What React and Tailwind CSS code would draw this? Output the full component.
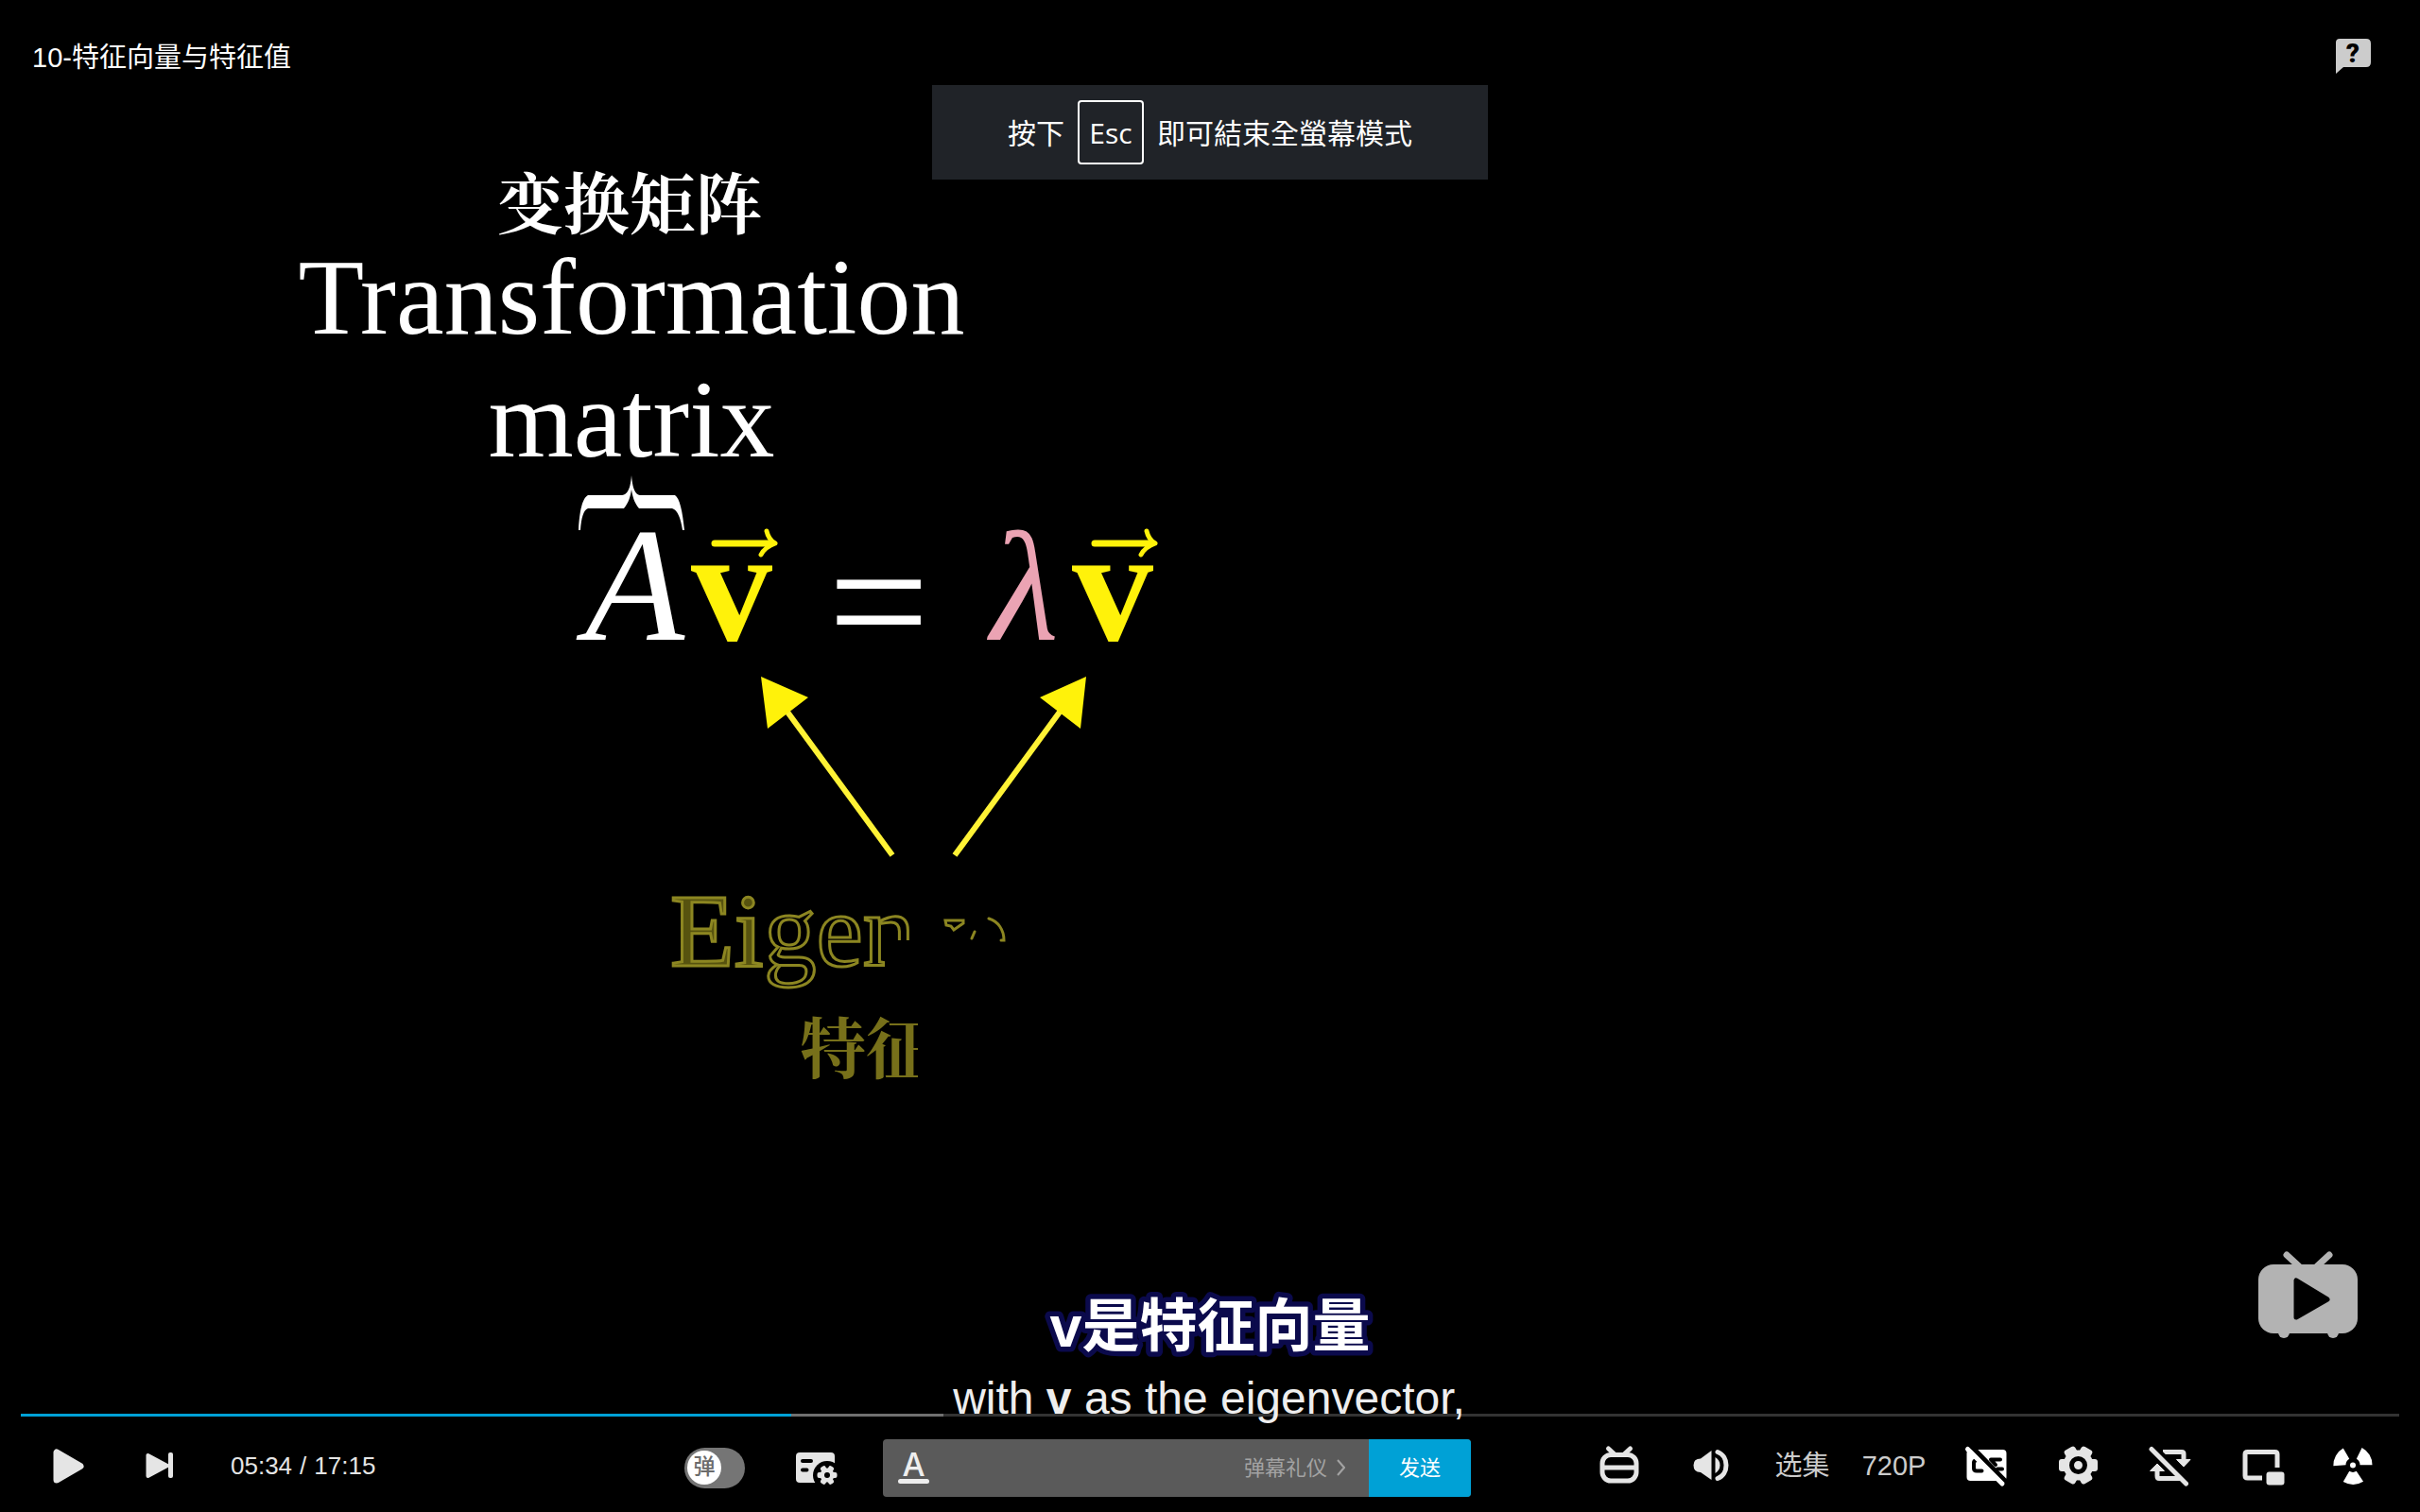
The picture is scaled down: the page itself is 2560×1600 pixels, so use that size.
import React from 'react';

const SANS = "font-['Liberation_Sans','Noto_Sans_CJK_SC',sans-serif]";

function Icon({ children }) {
  return (
    <svg viewBox="0 0 48 48" className="size-12 overflow-visible" fill="#e5e5e5" stroke="none" aria-hidden="true">
      {children}
    </svg>
  );
}

function Control({ label, children }) {
  return (
    <button type="button" aria-label={label} className="flex h-12 w-[97px] shrink-0 items-center justify-center">
      {children}
    </button>
  );
}

function VideoFrame() {
  return (
    <svg viewBox="0 0 2560 1600" className="absolute inset-0 h-full w-full" role="img" aria-label="特征向量">
      <defs>
        <clipPath id="written">
          <path d="M700 920H980V995H936V1060H700Z" />
        </clipPath>
        <clipPath id="reveal">
          <rect x="840" y="1060" width="131" height="100" />
        </clipPath>
      </defs>

      <g fill="#fff" textAnchor="middle">
        <text x="666" y="242" fontSize="70" className="font-['Noto_Serif_CJK_SC','Noto_Sans_CJK_SC',serif] font-bold">变换矩阵</text>
        <text x="668" y="353" fontSize="114" className="font-['Liberation_Serif',serif]">Transformation</text>
        <text x="668" y="483" fontSize="116" className="font-['Liberation_Serif',serif]">matrix</text>
      </g>

      <path
        fill="#fff"
        d="M612 561C613 541 616 527 622 524H658C665 523 667 515 668 503C669 515 671 523 677 524H714C719 527 722 541 724 561H722C720 548 717 540 711 538H676C671 532 669 525 668 518C667 525 665 532 660 538H622C617 540 615 548 614 561Z"
      />
      <g className="font-['Liberation_Serif',serif]">
        <text x="619" y="677" fontSize="172" fill="#fff" className="italic">A</text>
        <text x="731" y="677" fontSize="172" fill="#fff20a" className="font-bold">v</text>
        <text x="876" y="701" fontSize="190" fill="#fff">=</text>
        <text x="1048" y="677" fontSize="166" fill="#eba3b3" className="italic">λ</text>
        <text x="1134" y="677" fontSize="172" fill="#fff20a" className="font-bold">v</text>
      </g>
      <g fill="none" stroke="#fff20a" strokeLinecap="round" strokeLinejoin="round">
        <path strokeWidth="7" d="M756 575H816M1158 575H1218" />
        <path strokeWidth="5" d="M811 562Q813 571 820 575Q809 579 805 587M1213 562Q1215 571 1222 575Q1211 579 1207 587" />
      </g>
      <g stroke="#fff235" strokeWidth="6">
        <path d="M832 752L944 905M1122 752L1010 905" />
      </g>
      <path fill="#fff20a" d="M805 716L855 738L812 771ZM1149 716L1100 738L1143 771Z" />

      <g className="font-['Liberation_Serif',serif]" stroke="#8c8621" strokeWidth="3" fontSize="111">
        <text x="709" y="1022" fill="#57530f">Ei</text>
        <g clipPath="url(#written)">
          <text x="808" y="1022" fill="#000">gen</text>
        </g>
      </g>
      <g fill="none" stroke="#8c8621" strokeWidth="3" strokeLinecap="round">
        <path d="M1000 974H1019V977L1009 984L1006 980L1001 979ZM1031 986L1028 993M1046 972C1056 975 1062 984 1062 995H1059" />
      </g>
      <g clipPath="url(#reveal)">
        <text x="846" y="1136" fontSize="70" fill="#77701a" className="font-['Noto_Serif_CJK_SC','Noto_Sans_CJK_SC',serif] font-bold">特征</text>
      </g>

      <text
        x="1280"
        y="1425"
        fontSize="61"
        textAnchor="middle"
        fill="#fff"
        stroke="#0b0a4c"
        strokeWidth="11"
        strokeLinejoin="round"
        className="font-['Liberation_Sans','Noto_Sans_CJK_SC',sans-serif] font-bold [paint-order:stroke]"
      >
        v是特征向量
      </text>
      <text x="1279" y="1496" fontSize="48" textAnchor="middle" fill="#eee" className="font-['Liberation_Sans',sans-serif]">
        with <tspan className="font-bold">v</tspan> as the eigenvector,
      </text>
    </svg>
  );
}

function Header() {
  return (
    <header className="relative flex items-center justify-between px-[34px] pt-8">
      <h1 className="text-[29px] leading-[58px] text-white">10-特征向量与特征值</h1>
      <button type="button" aria-label="帮助" className="mb-1 mr-[15px]">
        <svg viewBox="0 0 44 44" className="size-11" aria-hidden="true">
          <path fill="#ccc" d="M8 4H36Q41 4 41 9V29Q41 34 36 34H12L4 41V8Q4 4 8 4Z" />
          <text x="22" y="29" fontSize="28" textAnchor="middle" className="font-['Roboto',sans-serif] font-black">?</text>
        </svg>
      </button>
    </header>
  );
}

function FullscreenToast() {
  return (
    <div className="absolute left-1/2 top-[90px] flex h-[100px] w-[588px] -translate-x-1/2 items-center justify-center gap-[14px] bg-[#202328] font-['Open_Sans','Noto_Sans_CJK_TC',sans-serif] text-[30px] text-white">
      <span>按下</span>
      <kbd className="flex h-[68px] w-[70px] items-center justify-center rounded border-2 border-white font-['Open_Sans',sans-serif]">Esc</kbd>
      <span>即可結束全螢幕模式</span>
    </div>
  );
}

function Watermark() {
  return (
    <svg viewBox="0 0 105 92" className="absolute bottom-[184px] right-[66px] w-[105px]" aria-hidden="true">
      <path stroke="#b3b3b3" strokeWidth="7" strokeLinecap="round" d="M30 4L43 16M75 4L62 16" />
      <circle cx="27" cy="86" r="6" fill="#b3b3b3" />
      <circle cx="79" cy="86" r="6" fill="#b3b3b3" />
      <rect y="14" width="105" height="73" rx="16" fill="#b3b3b3" />
      <path fill="#000" stroke="#000" strokeWidth="5" strokeLinejoin="round" d="M40 31V70L73 51Z" />
    </svg>
  );
}

function Progress() {
  return (
    <div role="progressbar" aria-label="播放进度" aria-valuenow={33} className="mx-[22px] flex h-[3px] bg-white/20">
      <div className="bg-[#00a1d6]" style={{ width: '32.4%' }} />
      <div className="bg-[#707070]" style={{ width: '6.4%' }} />
    </div>
  );
}

function Playback() {
  return (
    <div className="flex items-center">
      <Control label="播放">
        <Icon>
          <path stroke="#e5e5e5" strokeWidth="7" strokeLinejoin="round" d="M13 10V39L38 24.500Z" />
        </Icon>
      </Control>
      <Control label="下一集">
        <Icon>
          <path stroke="#e5e5e5" strokeWidth="4" strokeLinejoin="round" d="M12.500 13V35L33 24Z" />
          <rect x="34" y="10" width="5" height="27" rx="2" />
        </Icon>
      </Control>
      <div className="ml-[28px] flex w-[157px] gap-2 whitespace-nowrap text-[26px] text-[#e5e5e5]">
        <span>05:34</span>
        <span>/</span>
        <span>17:15</span>
      </div>
    </div>
  );
}

function Danmaku() {
  return (
    <div className="ml-[323px] mr-[108px] flex flex-1 items-center pt-1">
      <label className="relative mr-[52px] block shrink-0">
        <input
          type="checkbox"
          aria-label="弹幕开关"
          className="block h-[43px] w-16 cursor-pointer appearance-none rounded-full bg-[#757575]"
        />
        <span className="pointer-events-none absolute left-[3px] top-[3px] flex size-9 items-center justify-center rounded-full bg-white text-[23px] font-medium leading-none text-[#6b6b6b]">
          弹
        </span>
      </label>
      <button type="button" aria-label="弹幕设置" className="-mt-1 mr-[46px] shrink-0">
        <Icon>
          <rect x="2" y="10" width="41" height="32" rx="4" />
          <path stroke="#000" strokeWidth="4" strokeLinecap="round" d="M9 19H18M9 28.500H13.500" />
          <circle cx="35" cy="34" r="15" fill="#000" />
          <circle cx="35" cy="34" r="7.500" />
          <g>
            <rect x="24.500" y="31" width="21" height="6" rx="2" />
            <rect x="24.500" y="31" width="21" height="6" rx="2" transform="rotate(60 35 34)" />
            <rect x="24.500" y="31" width="21" height="6" rx="2" transform="rotate(120 35 34)" />
          </g>
          <circle cx="35" cy="34" r="3" fill="#000" />
        </Icon>
      </button>
      <form className="flex h-[61px] flex-1 overflow-hidden rounded bg-[#5a5a5a]">
        <button type="button" aria-label="字体样式" className="ml-4 flex shrink-0 flex-col items-center pt-3 text-[#eee]">
          <span className="font-['Inter',sans-serif] text-[34px] font-medium leading-[30px]">A</span>
          <span className="h-[5px] w-[33px] rounded-full bg-[#eee]" />
        </button>
        <input type="text" aria-label="发送弹幕" className="min-w-0 flex-1 bg-transparent px-4 text-[22px] text-white outline-none" />
        <a href="#etiquette" className="flex shrink-0 items-center gap-[10px] pr-[25px] text-[22px] text-[#a3a3a3]">
          弹幕礼仪
          <svg viewBox="0 0 9 18" className="h-[18px] w-[9px]" fill="none" stroke="#a3a3a3" strokeWidth="2" aria-hidden="true">
            <path d="M1 1L8 9L1 17" />
          </svg>
        </a>
        <button type="submit" className="w-[108px] shrink-0 bg-[#00a1d6] text-[22px] text-white">
          发送
        </button>
      </form>
    </div>
  );
}

function Blade({ angle }) {
  return <path fill="#fff" d="M31.500 23.300A7.500 7.500 0 0 0 27.800 16.800L33.600 5A20.500 20.500 0 0 1 44.500 23.300Z" transform={`rotate(${angle} 24 23.3)`} />;
}

function Settings() {
  return (
    <div className="flex items-center">
      <Control label="小电视">
        <Icon>
          <g fill="none" stroke="#e5e5e5" strokeWidth="5" strokeLinecap="round">
            <rect x="6" y="12.500" width="36" height="27.500" rx="9" />
            <path d="M7 26H41M12.500 6L19 12M35.500 6L29 12" />
          </g>
        </Icon>
      </Control>
      <Control label="音量">
        <Icon>
          <path d="M24.500 8V39L13 31Q5.500 31 5.500 23.500Q5.500 16.500 13 16.500Z" />
          <path d="M28.500 15Q33.500 18 33.500 23.500Q33.500 29 28.500 32Z" />
          <path fill="none" stroke="#e5e5e5" strokeWidth="5" strokeLinecap="round" d="M31 9.500C43 14 43 33 31 37.500" />
        </Icon>
      </Control>
      <button type="button" className="w-[97px] text-[29px] leading-none text-[#ccc]">选集</button>
      <button type="button" className="w-[97px] text-[29px] leading-none text-[#ccc]">720P</button>
      <Control label="字幕">
        <Icon>
          <rect x="3.500" y="7" width="42" height="33" rx="4" fill="#fff" />
          <g fill="none" stroke="#000" strokeWidth="4" strokeLinejoin="round" strokeLinecap="round">
            <path d="M13 18.500Q11 19 11 21V26.500Q11 29.500 14 29.500H19.500" />
            <path d="M39 17.500H29L34 23M36 27.500H41" />
          </g>
          <path stroke="#000" strokeWidth="5" d="M8 3L46.500 42.500" />
          <path stroke="#fff" strokeWidth="5" strokeLinecap="round" d="M4.500 6.500L41 43" />
        </Icon>
      </Control>
      <Control label="设置">
        <Icon>
          <circle cx="24.500" cy="23.500" r="16" />
          <rect x="4" y="17" width="41" height="13" rx="3" />
          <rect x="4" y="17" width="41" height="13" rx="3" transform="rotate(60 24.500 23.500)" />
          <rect x="4" y="17" width="41" height="13" rx="3" transform="rotate(120 24.500 23.500)" />
          <circle cx="24.500" cy="23.500" r="7" fill="none" stroke="#000" strokeWidth="5" />
        </Icon>
      </Control>
      <Control label="洗脑循环">
        <Icon>
          <g fill="none" stroke="#e5e5e5" strokeWidth="5">
            <path d="M17 9.500H37Q39 9.500 39 11.500V18M11 29V35Q11 37.500 13 37.500H35" />
          </g>
          <path stroke="#e5e5e5" strokeWidth="1" strokeLinejoin="round" d="M31.500 17.500H46L39 25ZM3.500 29.500H18.500L11 22Z" />
          <path stroke="#000" strokeWidth="4" d="M8.500 3.500L46 41" />
          <path stroke="#e5e5e5" strokeWidth="5" strokeLinecap="round" d="M5 6.500L41.500 43" />
        </Icon>
      </Control>
      <Control label="画中画">
        <Icon>
          <path fill="none" stroke="#e5e5e5" strokeWidth="5" d="M41 26V12Q41 9.500 38.500 9.500H9.500Q7 9.500 7 12V34.500Q7 37 9.500 37H25" />
          <rect x="29.500" y="30.500" width="19" height="14" rx="3" />
        </Icon>
      </Control>
      <Control label="退出全屏">
        <Icon>
          <circle cx="24" cy="23.500" r="3" fill="#fff" />
          <Blade angle={0} />
          <Blade angle={120} />
          <Blade angle={240} />
        </Icon>
      </Control>
    </div>
  );
}

export default function App() {
  return (
    <main className={`relative flex min-h-screen flex-col overflow-hidden bg-black ${SANS}`}>
      <VideoFrame />
      <Header />
      <FullscreenToast />
      <Watermark />
      <footer className="relative mt-auto">
        <Progress />
        <div className="flex h-[101px] items-center pb-px pl-[22px] pr-[23px] pt-1">
          <Playback />
          <Danmaku />
          <Settings />
        </div>
      </footer>
    </main>
  );
}
